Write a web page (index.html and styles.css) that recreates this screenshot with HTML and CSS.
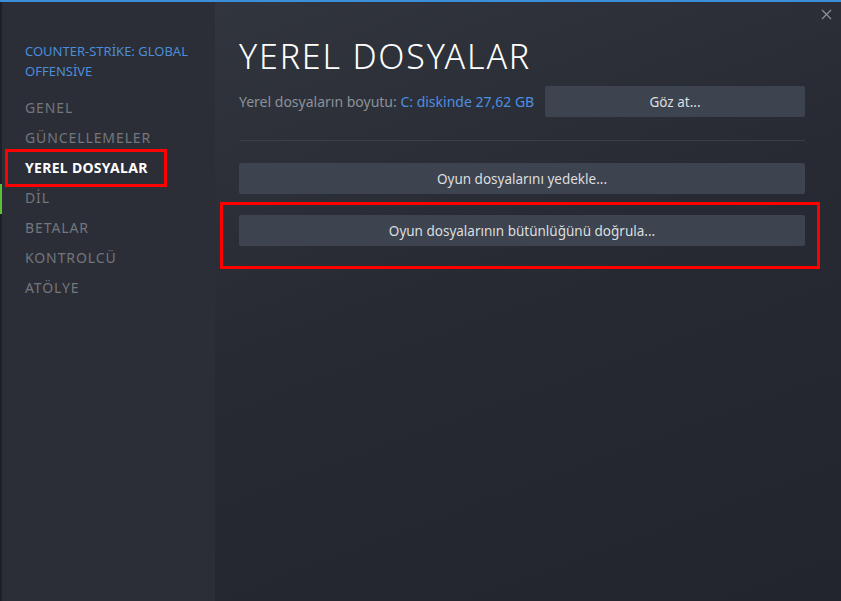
FILE: index.html
```html
<!DOCTYPE html>
<html>
<head>
    <link rel="stylesheet" href="styles.css">
</head>
<body>
    <div class="topline"></div>
    <div class="window">
        <div class="edge"><span class="edge-mark"></span></div>
        <div class="sidebar">
            <div class="game-title">COUNTER-STRİKE: GLOBAL OFFENSİVE</div>
            <ul class="menu">
                <li>GENEL</li>
                <li>GÜNCELLEMELER</li>
                <li class="active">YEREL DOSYALAR</li>
                <li>DİL</li>
                <li>BETALAR</li>
                <li>KONTROLCÜ</li>
                <li>ATÖLYE</li>
            </ul>
        </div>
        <div class="main">
            <svg class="close" width="11" height="11" viewBox="0 0 11 11">
                <path d="M1 1 L10 10 M10 1 L1 10" stroke="#8a9097" stroke-width="1.3" fill="none"/>
            </svg>
            <h1>YEREL DOSYALAR</h1>
            <div class="size-row">
                <span class="size-text">Yerel dosyaların boyutu: <span class="link">C: diskinde 27,62 GB</span></span>
                <button class="btn btn-browse">Göz at...</button>
            </div>
            <div class="divider"></div>
            <button class="btn">Oyun dosyalarını yedekle...</button>
            <div class="mark-box">
                <button class="btn">Oyun dosyalarının bütünlüğünü doğrula...</button>
            </div>
        </div>
    </div>
</body>
</html>
```

FILE: styles.css
```css
html, body {
    margin: 0;
    height: 100%;
    background-color: #23262e;
    font-family: "Noto Sans", "Open Sans", sans-serif;
    overflow: hidden;
}
.topline {
    height: 2px;
    background-color: #3b8fd8;
}
.window {
    display: flex;
    height: 599px;
}
.edge {
    width: 2px;
    background-color: #1d2027;
    padding-top: 182px;
}
.edge-mark {
    display: block;
    height: 30px;
    background-color: #5cc133;
}
.sidebar {
    width: 213px;
    background-color: #2b2e36;
    padding-top: 39px;
    box-sizing: border-box;
}
.game-title {
    color: #4a8ddb;
    font-size: 13px;
    line-height: 20px;
    padding-left: 23px;
    padding-right: 10px;
}
.menu {
    list-style: none;
    margin: 12px 0 0 0;
    padding: 0;
}
.menu li {
    color: #73767c;
    font-size: 14px;
    line-height: 30px;
    letter-spacing: 0.9px;
    padding-left: 23px;
}
.menu li.active {
    color: #ffffff;
    font-weight: bold;
    letter-spacing: 0.3px;
    position: relative;
}
.menu li.active::after {
    content: "";
    position: absolute;
    left: 3px;
    top: -4px;
    width: 162px;
    height: 38px;
    border: 3px solid #ff0000;
    box-sizing: border-box;
}
.main {
    flex: 1;
    position: relative;
    padding: 0 36px 0 24px;
    background: linear-gradient(160deg, #31353e 0%, #272a32 45%, #22252d 100%);
}
.close {
    position: absolute;
    right: 9px;
    top: 7px;
}
h1 {
    margin: 32px 0 0 0;
    color: #ffffff;
    font-size: 34px;
    font-weight: 300;
    letter-spacing: 1.8px;
    line-height: 44px;
}
.size-row {
    display: flex;
    align-items: center;
    margin-top: 8px;
}
.size-text {
    color: #8b9299;
    font-size: 14px;
    flex: 1;
}
.link {
    color: #4d8fe0;
}
.btn {
    display: block;
    width: 100%;
    height: 31px;
    border: none;
    border-radius: 2px;
    background-color: #3d4450;
    color: #dcdedf;
    font-family: "Noto Sans", "Open Sans", sans-serif;
    font-size: 13.5px;
    cursor: pointer;
}
.btn-browse {
    width: 260px;
    flex: none;
}
.divider {
    height: 1px;
    background-color: #393e47;
    margin: 23px 0 22px 0;
}
.mark-box {
    border: 3px solid #ff0000;
    margin: 8px -15px 0 -19px;
    padding: 10px 12px 20px 16px;
}
```
